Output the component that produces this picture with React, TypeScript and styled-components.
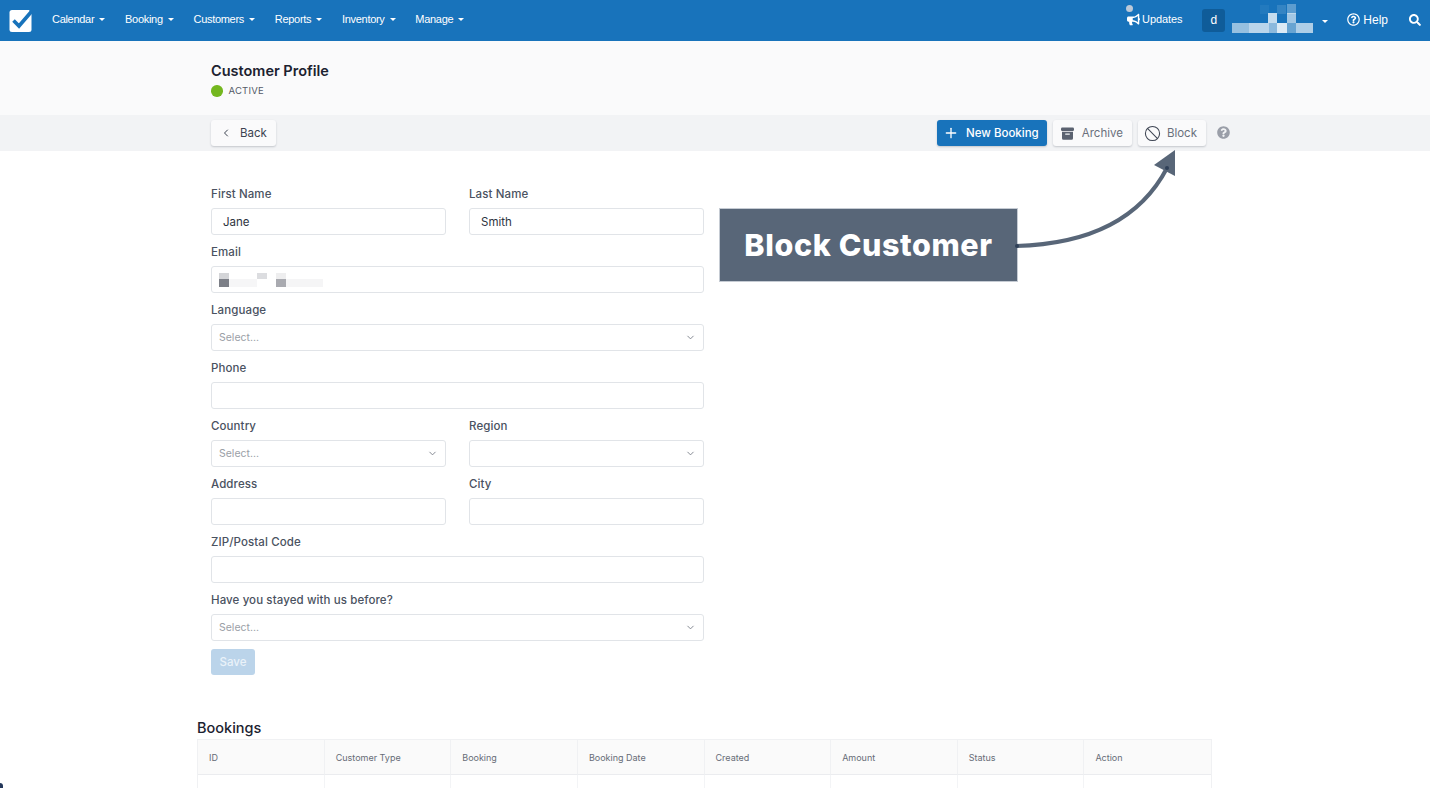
import React, { ReactElement } from 'react';
import styled, { createGlobalStyle } from 'styled-components';
import { Ban, ChevronDown, ChevronLeft, Plus } from 'lucide-react';
import { FaBullhorn, FaQuestionCircle, FaRegQuestionCircle, FaSearch } from 'react-icons/fa';

const Colors = {
  blue: '#1873bb',
  blueDark: '#0f5c99',
  slate: '#586678',
  slateDark: '#2f4058',
  label: '#4a5261',
  border: '#e1e4e8',
  placeholder: '#9a9ea6',
  ink: '#1c2230',
};

const GlobalStyle = createGlobalStyle`
  html, body {
    margin: 0;
    height: 100%;
    overflow: hidden;
    background: #fff;
    font-family: Inter, "Liberation Sans", sans-serif;
  }
  * { box-sizing: border-box; }
`;

const NAV_ITEMS = ['Calendar', 'Booking', 'Customers', 'Reports', 'Inventory', 'Manage'];
const COLUMNS = ['ID', 'Customer Type', 'Booking', 'Booking Date', 'Created', 'Amount', 'Status', 'Action'];

const Logo = (): ReactElement => (
  <LogoBox viewBox="0 0 24 24">
    <rect x="0.5" y="1" width="22" height="22" rx="2.5" fill="#fff" />
    <path d="M4.5 11.5 L10 17 L22.5 2.5" fill="none" stroke={Colors.blue} strokeWidth="3.6" />
    <path d="M20 1 L23.5 1 L23.5 5" fill={Colors.blue} />
  </LogoBox>
);

const ArchiveIcon = (): ReactElement => (
  <svg viewBox="0 0 13 13" width="13" height="13">
    <rect x="0" y="0.5" width="13" height="3.5" rx="1.2" fill="#5b6270" />
    <path d="M1 4.8 H12 V11.2 A1.5 1.5 0 0 1 10.5 12.8 H2.5 A1.5 1.5 0 0 1 1 11.2 Z" fill="#5b6270" />
    <rect x="4" y="6.4" width="5" height="1.4" rx="0.7" fill="#f2f3f5" />
  </svg>
);

const NameBlur = (): ReactElement => (
  <NameSvg viewBox="0 0 82 29" width="82" height="29">
    <rect x="28" y="1" width="9" height="9" fill="#fff" opacity="0.05" />
    <rect x="45" y="1" width="9" height="9" fill="#fff" opacity="0.12" />
    <rect x="55" y="0" width="9" height="10" fill="#fff" opacity="0.3" />
    <rect x="36" y="9" width="9" height="10" fill="#fff" opacity="0.75" />
    <rect x="55" y="9" width="9" height="10" fill="#fff" opacity="0.6" />
    <rect x="0" y="19" width="17" height="10" fill="#fff" opacity="0.55" />
    <rect x="17" y="19" width="20" height="10" fill="#fff" opacity="0.7" />
    <rect x="37" y="19" width="8" height="10" fill="#fff" opacity="0.5" />
    <rect x="45" y="19" width="10" height="10" fill="#fff" opacity="0.85" />
    <rect x="55" y="19" width="9" height="10" fill="#fff" opacity="0.35" />
    <rect x="64" y="19" width="17" height="10" fill="#fff" opacity="0.65" />
  </NameSvg>
);

const EmailBlur = (): ReactElement => (
  <EmailSvg viewBox="0 0 110 16" width="110" height="16">
    <rect x="0" y="0" width="10" height="6" fill="#d4d5d8" />
    <rect x="0" y="6" width="10" height="8" fill="#7c7f87" />
    <rect x="10" y="6" width="28" height="8" fill="#f6f6f7" />
    <rect x="38" y="0" width="10" height="6" fill="#dcdde0" />
    <rect x="57" y="0" width="10" height="6" fill="#eeeeef" />
    <rect x="57" y="6" width="10" height="8" fill="#a9aab0" />
    <rect x="67" y="6" width="37" height="8" fill="#f5f5f6" />
  </EmailSvg>
);

interface FieldProps {
  label: string;
  value?: string;
  placeholder?: string;
  select?: boolean;
  wide?: boolean;
  children?: ReactElement;
}

const Field = ({ label, value, placeholder, select, wide, children }: FieldProps): ReactElement => (
  <FieldBox $wide={wide}>
    <Label>{label}</Label>
    <Input>
      {children}
      {value && <span>{value}</span>}
      {placeholder && <Placeholder>{placeholder}</Placeholder>}
      {select && <SelectChevron size={11} strokeWidth={2} />}
    </Input>
  </FieldBox>
);

export default function App(): ReactElement {
  return (
    <Page>
      <GlobalStyle />
      <TopBar>
        <Logo />
        <NavList>
          {NAV_ITEMS.map((item) => (
            <NavItem key={item}>
              {item}
              <Caret />
            </NavItem>
          ))}
        </NavList>
        <TopRight>
          <Updates>
            <UpdatesDot />
            <FaBullhorn size={13} />
            Updates
          </Updates>
          <Avatar>d</Avatar>
          <NameBlur />
          <UserCaret />
          <Help>
            <FaRegQuestionCircle size={13} />
            Help
          </Help>
          <SearchButton>
            <FaSearch size={12} />
          </SearchButton>
        </TopRight>
      </TopBar>

      <Header>
        <Title>Customer Profile</Title>
        <Status>
          <StatusDot />
          ACTIVE
        </Status>
      </Header>

      <Toolbar>
        <ToolbarInner>
          <Button>
            <ChevronLeft size={12} strokeWidth={2} />
            Back
          </Button>
          <ToolbarActions>
            <PrimaryButton>
              <Plus size={16} strokeWidth={2} />
              New Booking
            </PrimaryButton>
            <MutedButton>
              <ArchiveIcon />
              Archive
            </MutedButton>
            <BlockButton>
              <Ban size={17} strokeWidth={1.5} color="#3f4654" />
              Block
            </BlockButton>
            <FaQuestionCircle size={13} color="#9a9ea8" />
          </ToolbarActions>
        </ToolbarInner>
      </Toolbar>

      <Form>
        <Field label="First Name" value="Jane" />
        <Field label="Last Name" value="Smith" />
        <Field label="Email" wide>
          <EmailBlur />
        </Field>
        <Field label="Language" placeholder="Select..." select wide />
        <Field label="Phone" wide />
        <Field label="Country" placeholder="Select..." select />
        <Field label="Region" select />
        <Field label="Address" />
        <Field label="City" />
        <Field label="ZIP/Postal Code" wide />
        <Field label="Have you stayed with us before?" placeholder="Select..." select wide />
      </Form>
      <SaveButton>Save</SaveButton>

      <BookingsSection>
        <BookingsTitle>Bookings</BookingsTitle>
        <Table>
          {COLUMNS.map((column) => (
            <HeadCell key={column}>{column}</HeadCell>
          ))}
          {COLUMNS.map((column) => (
            <BodyCell key={column} />
          ))}
        </Table>
      </BookingsSection>

      <Callout>Block Customer</Callout>
      <Arrow viewBox="0 0 175 110" width="175" height="110">
        <path d="M6 101 Q118 98 157 23" fill="none" stroke={Colors.slate} strokeWidth="4" />
        <path d="M165 5 L144 20 L165 31 Z" fill={Colors.slate} />
        <circle cx="157" cy="23" r="2" fill={Colors.slateDark} />
        <circle cx="7" cy="101" r="2" fill={Colors.slateDark} />
      </Arrow>
      <CornerMark />
    </Page>
  );
}

const Page = styled.div`
  position: relative;
  width: 1430px;
  height: 788px;
  overflow: hidden;
  background: #fff;
`;

const TopBar = styled.header`
  display: flex;
  align-items: center;
  height: 41px;
  padding-left: 9px;
  background: ${Colors.blue};
  color: #fff;
  font-family: 'Liberation Sans', Arial, sans-serif;
  font-size: 11px;
`;

const LogoBox = styled.svg`
  width: 24px;
  height: 24px;
  flex-shrink: 0;
`;

const NavList = styled.nav`
  display: flex;
  gap: 19.8px;
  margin-left: 19px;
  padding-bottom: 3px;
`;

const NavItem = styled.span`
  display: flex;
  align-items: center;
  gap: 5px;
  letter-spacing: -0.3px;
`;

const Caret = styled.i`
  width: 0;
  height: 0;
  margin-top: 1px;
  border-left: 3px solid transparent;
  border-right: 3px solid transparent;
  border-top: 3px solid #fff;
`;

const TopRight = styled.div`
  display: flex;
  align-items: center;
  margin-left: auto;
`;

const Updates = styled.div`
  position: relative;
  display: flex;
  align-items: center;
  gap: 2px;
  padding-bottom: 3px;
  letter-spacing: -0.1px;
`;

const UpdatesDot = styled.i`
  position: absolute;
  left: -1px;
  top: -8px;
  width: 7px;
  height: 7px;
  border-radius: 50%;
  background: #bcc9d8;
`;

const Avatar = styled.div`
  display: flex;
  align-items: center;
  justify-content: center;
  width: 23px;
  height: 23px;
  margin-left: 20px;
  margin-bottom: 1px;
  border-radius: 3px;
  background: ${Colors.blueDark};
  font-size: 12px;
`;

const NameSvg = styled.svg`
  margin-left: 7px;
  margin-top: -4px;
`;

const UserCaret = styled(Caret)`
  margin-left: 8px;
`;

const Help = styled.div`
  display: flex;
  align-items: center;
  gap: 3px;
  margin-left: 19px;
  padding-bottom: 2px;
  font-size: 12px;
`;

const SearchButton = styled.div`
  display: flex;
  margin-left: 21px;
  margin-right: 9px;
  padding-bottom: 2px;
`;

const Header = styled.section`
  height: 74px;
  padding: 21px 0 0 211px;
  background: #fafafb;
`;

const Title = styled.h1`
  margin: 0;
  font-size: 14.5px;
  line-height: 18px;
  font-weight: 600;
  color: ${Colors.ink};
`;

const Status = styled.div`
  display: flex;
  align-items: center;
  gap: 6px;
  margin-top: 4px;
  font-size: 9.5px;
  line-height: 14px;
  letter-spacing: 0.2px;
  color: #555b68;
`;

const StatusDot = styled.i`
  width: 11.5px;
  height: 11.5px;
  border-radius: 50%;
  background: #74b71f;
`;

const Toolbar = styled.section`
  height: 36px;
  padding: 5px 0 0 211px;
  background: #f2f3f5;
`;

const ToolbarInner = styled.div`
  display: flex;
  justify-content: space-between;
  width: 1019px;
`;

const ToolbarActions = styled.div`
  display: flex;
  align-items: center;
  gap: 6px;

  > svg:last-child {
    margin-left: 5px;
    margin-bottom: 2px;
  }
`;

const Button = styled.button`
  display: flex;
  align-items: center;
  gap: 8px;
  height: 26px;
  padding: 0 9px;
  border: 0;
  border-radius: 3px;
  background: #fafafb;
  box-shadow: 0 1px 2px rgba(30, 40, 60, 0.22);
  font-family: Inter, sans-serif;
  font-size: 11.5px;
  color: #3c4350;
`;

const MutedButton = styled(Button)`
  gap: 8px;
  padding: 0 9px 0 8px;
  color: #6a707c;
`;

const BlockButton = styled(MutedButton)`
  gap: 6px;
  padding: 0 9px 0 6px;
`;

const PrimaryButton = styled(Button)`
  gap: 7px;
  padding: 0 8px 0 6px;
  background: ${Colors.blue};
  color: #fff;
  font-weight: 500;
`;

const Form = styled.form`
  display: grid;
  grid-template-columns: 235px 235px;
  column-gap: 23px;
  margin: 27px 0 0 211px;
  width: 493px;
`;

const FieldBox = styled.div<{ $wide?: boolean }>`
  grid-column: ${(p) => (p.$wide ? '1 / span 2' : 'auto')};
  height: 58px;
`;

const Label = styled.label`
  display: block;
  height: 30px;
  font-size: 11.5px;
  line-height: 32px;
  letter-spacing: 0.1px;
  font-weight: 500;
  color: ${Colors.label};
`;

const Input = styled.div`
  position: relative;
  display: flex;
  align-items: center;
  height: 27px;
  padding: 0 11px;
  border: 1px solid ${Colors.border};
  border-radius: 3px;
  background: #fff;
  font-size: 11.5px;
  color: #2e3440;
`;

const Placeholder = styled.span`
  margin-left: -4px;
  font-size: 10.5px;
  color: ${Colors.placeholder};
`;

const SelectChevron = styled(ChevronDown)`
  position: absolute;
  right: 7px;
  top: 7px;
  color: #7b808a;
`;

const EmailSvg = styled.svg`
  margin-left: -4px;
  margin-top: 2px;
  filter: blur(0.3px);
`;

const SaveButton = styled.button`
  display: block;
  width: 44px;
  height: 26px;
  margin: 7px 0 0 211px;
  padding: 0;
  border: 0;
  border-radius: 3px;
  background: #bbd4ea;
  color: #eaf2f9;
  font-family: Inter, sans-serif;
  font-size: 11.5px;
  font-weight: 500;
`;

const BookingsSection = styled.section`
  width: 1015px;
  margin: 44px 0 0 197px;
`;

const BookingsTitle = styled.h2`
  margin: 0 0 2px;
  font-size: 14.5px;
  line-height: 18px;
  font-weight: 500;
  color: ${Colors.ink};
`;

const Table = styled.div`
  display: grid;
  grid-template-columns: repeat(8, 1fr);
  border: 1px solid #f0f1f3;
  border-bottom: 0;
`;

const HeadCell = styled.div`
  height: 35px;
  padding: 0 11px;
  border-right: 1px solid #f0f1f3;
  border-bottom: 1px solid #ebecef;
  background: #fafafa;
  font-size: 9px;
  line-height: 35px;
  color: #676c77;

  &:nth-child(8) {
    border-right: 0;
  }
`;

const BodyCell = styled.div`
  height: 40px;
  border-right: 1px solid #f3f4f6;

  &:last-child {
    border-right: 0;
  }
`;

const Callout = styled.div`
  position: absolute;
  left: 719px;
  top: 208px;
  display: flex;
  align-items: center;
  justify-content: center;
  width: 299px;
  height: 74px;
  padding-bottom: 2px;
  border: 1px solid #c5cbd3;
  background: ${Colors.slate};
  color: #fff;
  font-family: Inter, sans-serif;
  font-size: 30.5px;
  letter-spacing: 0.6px;
  font-weight: 800;
`;

const Arrow = styled.svg`
  position: absolute;
  left: 1010px;
  top: 145px;
`;

const CornerMark = styled.i`
  position: absolute;
  left: 0;
  bottom: 0;
  width: 3px;
  height: 5px;
  border-top-right-radius: 3px;
  background: #24375a;
`;
